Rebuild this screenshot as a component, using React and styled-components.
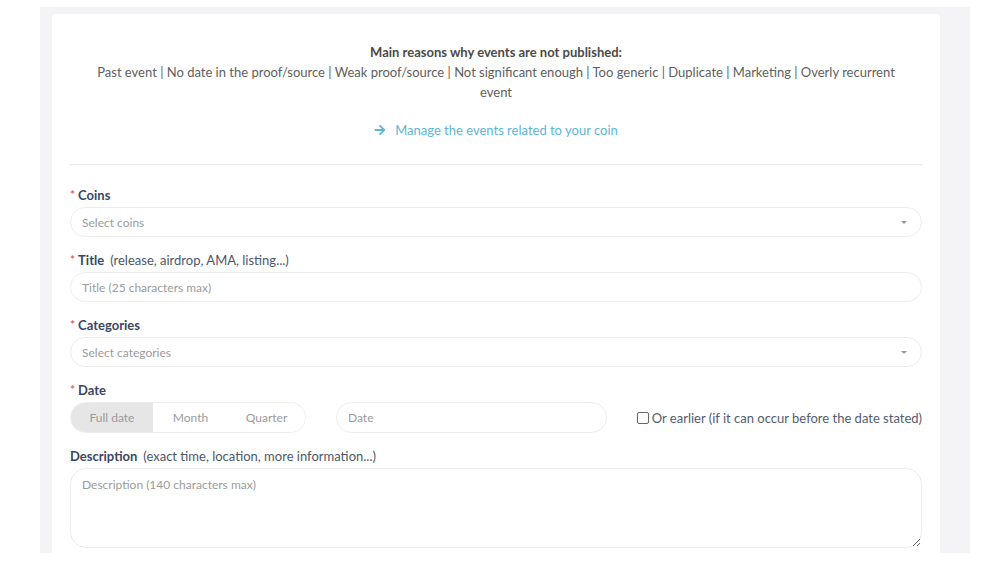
import React, { useState } from "react";
import styled, { createGlobalStyle } from "styled-components";
import { FaArrowRight } from "react-icons/fa";

const GlobalStyle = createGlobalStyle`
  html, body {
    margin: 0;
    padding: 0;
    background: #fff;
    font-family: "Lato", "Noto Sans", sans-serif;
  }
  * { box-sizing: border-box; }
`;

const Page = styled.div`
  width: 1000px;
  height: 562px;
  padding: 7px 30px 9px 40px;
  overflow: hidden;
`;

const Panel = styled.div`
  height: 100%;
  background: #f4f4f6;
  padding: 7px 30px 0 12px;
  overflow: hidden;
`;

const Card = styled.div`
  background: #fff;
  border-radius: 4px 4px 0 0;
  height: 100%;
  padding: 28px 18px 0;
  overflow: hidden;
`;

const Notice = styled.div`
  text-align: center;
  color: #606060;
  font-size: 13px;
  line-height: 20px;
`;

const NoticeTitle = styled.div`
  font-weight: 700;
  color: #4a4a4a;
`;

const NoticeText = styled.div`
  max-width: 806px;
  margin: 0 auto;
`;

const ManageLink = styled.a`
  display: inline-flex;
  align-items: center;
  gap: 9px;
  margin-top: 18px;
  color: #5cb6d6;
  font-size: 13px;
  line-height: 20px;
  text-decoration: none;
  cursor: pointer;
`;

const Separator = styled.hr`
  border: none;
  border-top: 1px solid #e9e9ec;
  margin: 23px 0 20px;
`;

const Form = styled.form`
  display: flex;
  flex-direction: column;
  gap: 13px;
`;

const Field = styled.div`
  display: flex;
  flex-direction: column;
  gap: 2px;
`;

const Label = styled.label`
  font-size: 13px;
  line-height: 20px;
  color: #3b4762;
  font-weight: 700;
  display: flex;
  align-items: center;
`;

const Star = styled.span`
  color: #e0413e;
  font-weight: 400;
  font-size: 12px;
  margin-right: 3px;
  position: relative;
  top: 0;
`;

const Hint = styled.span`
  font-weight: 400;
  color: #4d5669;
  margin-left: 6px;
`;

const Pill = styled.div`
  height: 30px;
  border: 1px solid #ededed;
  border-radius: 16px;
  display: flex;
  align-items: center;
  padding: 0 14px 0 11px;
  font-size: 12px;
  color: #9b9b9b;
  justify-content: space-between;
`;

const Input = styled.input`
  height: ${(p) => p.$h || 30}px;
  border: 1px solid #ededed;
  border-radius: 16px;
  padding: 0 11px;
  font-family: inherit;
  font-size: 12px;
  color: #444;
  outline: none;
  width: ${(p) => (p.$w ? p.$w + "px" : "100%")};
  &::placeholder { color: #9b9b9b; }
`;

const Caret = styled.span`
  width: 0;
  height: 0;
  border-left: 3px solid transparent;
  border-right: 3px solid transparent;
  border-top: 3px solid #9a9a9a;
`;

const DateRow = styled.div`
  display: flex;
  align-items: center;
`;

const Segments = styled.div`
  display: flex;
  width: 236px;
  height: 31px;
  border: 1px solid #ededed;
  border-radius: 16px;
  overflow: hidden;
  margin-right: 30px;
`;

const Segment = styled.button`
  flex: ${(p) => p.$flex};
  border: none;
  background: ${(p) => (p.$active ? "#e6e6e6" : "#fff")};
  color: #9b9b9b;
  font-family: inherit;
  font-size: 12px;
  cursor: pointer;
`;

const Check = styled.label`
  margin-left: auto;
  display: flex;
  align-items: center;
  gap: 3px;
  font-size: 13px;
  color: #535c70;
`;

const Box = styled.span`
  width: 12px;
  height: 12px;
  border: 1px solid #666;
  border-radius: 2px;
  display: inline-block;
`;

const TextArea = styled.textarea`
  height: 80px;
  border: 1px solid #ededed;
  border-radius: 16px;
  padding: 8px 11px;
  font-family: inherit;
  font-size: 12px;
  resize: vertical;
  outline: none;
  &::placeholder { color: #9b9b9b; }
`;

export default function App() {
  const [mode, setMode] = useState("full");
  return (
    <>
      <GlobalStyle />
      <Page>
        <Panel>
          <Card>
            <Notice>
              <NoticeTitle>Main reasons why events are not published:</NoticeTitle>
              <NoticeText>
                Past event | No date in the proof/source | Weak proof/source | Not significant enough | Too generic | Duplicate | Marketing | Overly recurrent event
              </NoticeText>
              <ManageLink>
                <FaArrowRight size={12} />
                Manage the events related to your coin
              </ManageLink>
            </Notice>
            <Separator />
            <Form>
              <Field>
                <Label><Star>*</Star>Coins</Label>
                <Pill>Select coins<Caret /></Pill>
              </Field>
              <Field>
                <Label><Star>*</Star>Title<Hint>(release, airdrop, AMA, listing...)</Hint></Label>
                <Input placeholder="Title (25 characters max)" />
              </Field>
              <Field>
                <Label><Star>*</Star>Categories</Label>
                <Pill>Select categories<Caret /></Pill>
              </Field>
              <Field>
                <Label><Star>*</Star>Date</Label>
                <DateRow>
                  <Segments>
                    <Segment type="button" $flex="83" $active={mode === "full"} onClick={() => setMode("full")}>Full date</Segment>
                    <Segment type="button" $flex="75" $active={mode === "month"} onClick={() => setMode("month")}>Month</Segment>
                    <Segment type="button" $flex="77" $active={mode === "quarter"} onClick={() => setMode("quarter")}>Quarter</Segment>
                  </Segments>
                  <Input $w={271} $h={31} placeholder="Date" />
                  <Check><Box />Or earlier (if it can occur before the date stated)</Check>
                </DateRow>
              </Field>
              <Field>
                <Label>Description<Hint>(exact time, location, more information...)</Hint></Label>
                <TextArea placeholder="Description (140 characters max)" />
              </Field>
            </Form>
          </Card>
        </Panel>
      </Page>
    </>
  );
}
